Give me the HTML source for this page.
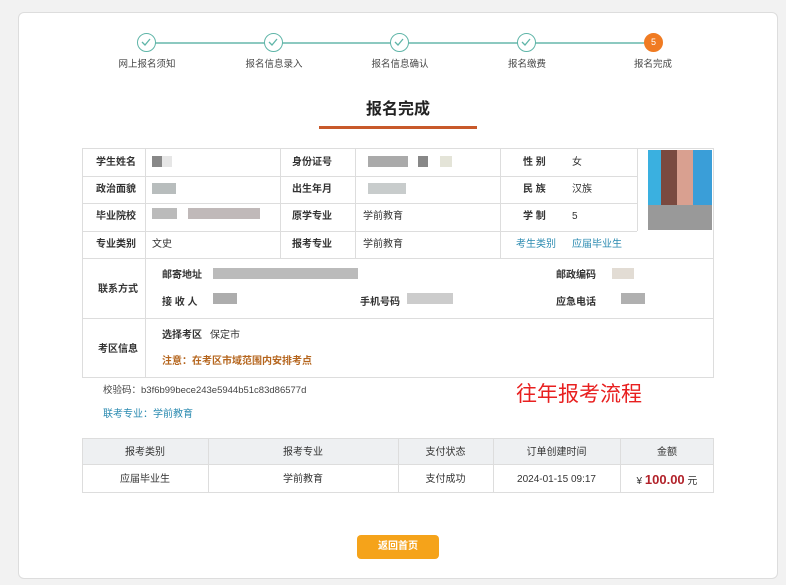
<!DOCTYPE html>
<html><head><meta charset="utf-8"><style>
*{margin:0;padding:0;box-sizing:border-box}
body{width:786px;height:585px;background:#f2f2f2;font-family:"Liberation Sans","Noto Sans CJK SC",sans-serif;font-size:10px;line-height:14px;color:#333;position:relative;overflow:hidden}
.card{position:absolute;left:18px;top:12px;width:760px;height:567px;background:#fff;border:1px solid #ddd;border-radius:6px}
.a{position:absolute}
.c{position:absolute;width:19px;height:19px;border-radius:50%;border:1.5px solid #5fb5a8;background:#fff;top:33px}
.c svg{position:absolute;left:3px;top:4px}
.lbl{position:absolute;top:58px;font-size:9.5px;color:#444;transform:translateX(-50%);white-space:nowrap}
.b{font-weight:bold;color:#333}
.px{position:absolute;height:11px}
.line{position:absolute;background:#ddd}
</style></head><body>
<div class="card"></div>
<div class="a" style="left:147px;top:42px;width:506px;height:1.5px;background:#8cc9c0"></div>
<div class="c" style="left:137px"><svg width="10" height="8"><path d="M1 4l3 3 5-6" stroke="#5fb5a8" stroke-width="1.3" fill="none"/></svg></div>
<div class="c" style="left:264px"><svg width="10" height="8"><path d="M1 4l3 3 5-6" stroke="#5fb5a8" stroke-width="1.3" fill="none"/></svg></div>
<div class="c" style="left:390px"><svg width="10" height="8"><path d="M1 4l3 3 5-6" stroke="#5fb5a8" stroke-width="1.3" fill="none"/></svg></div>
<div class="c" style="left:517px"><svg width="10" height="8"><path d="M1 4l3 3 5-6" stroke="#5fb5a8" stroke-width="1.3" fill="none"/></svg></div>
<div class="c" style="left:644px;background:#f07b22;border-color:#f07b22;color:#fff;font-size:9px;text-align:center;line-height:16px">5</div>
<div class="lbl" style="left:147px">网上报名须知</div>
<div class="lbl" style="left:274px">报名信息录入</div>
<div class="lbl" style="left:400px">报名信息确认</div>
<div class="lbl" style="left:527px">报名缴费</div>
<div class="lbl" style="left:653px">报名完成</div>
<div class="a" style="left:366px;top:100px;font-size:16px;line-height:20px;font-weight:bold;color:#222">报名完成</div>
<div class="a" style="left:319px;top:126px;width:158px;height:3px;background:#c8592a"></div>

<div class="a" style="left:82px;top:148px;width:632px;height:230px;border:1px solid #ddd"></div>
<div class="line" style="left:82px;top:176px;width:555px;height:1px"></div>
<div class="line" style="left:82px;top:203px;width:555px;height:1px"></div>
<div class="line" style="left:82px;top:231px;width:555px;height:1px"></div>
<div class="line" style="left:82px;top:258px;width:632px;height:1px"></div>
<div class="line" style="left:82px;top:318px;width:632px;height:1px"></div>
<div class="line" style="left:145px;top:148px;width:1px;height:230px"></div>
<div class="line" style="left:280px;top:148px;width:1px;height:110px"></div>
<div class="line" style="left:355px;top:148px;width:1px;height:110px"></div>
<div class="line" style="left:500px;top:148px;width:1px;height:110px"></div>
<div class="line" style="left:637px;top:148px;width:1px;height:83px"></div>
<div class="a b" style="left:96px;top:156px">学生姓名</div>
<div class="a b" style="left:96px;top:183px">政治面貌</div>
<div class="a b" style="left:96px;top:210px">毕业院校</div>
<div class="a b" style="left:96px;top:238px">专业类别</div>
<div class="a" style="left:152px;top:238px">文史</div>
<div class="a b" style="left:292px;top:156px">身份证号</div>
<div class="a b" style="left:292px;top:183px">出生年月</div>
<div class="a b" style="left:292px;top:210px">原学专业</div>
<div class="a b" style="left:292px;top:238px">报考专业</div>
<div class="a" style="left:363px;top:210px">学前教育</div>
<div class="a" style="left:363px;top:238px">学前教育</div>
<div class="a b" style="left:523px;top:156px">性 别</div>
<div class="a b" style="left:523px;top:183px">民 族</div>
<div class="a b" style="left:523px;top:210px">学 制</div>
<div class="a" style="left:516px;top:238px;color:#2a8ab0">考生类别</div>
<div class="a" style="left:572px;top:156px">女</div>
<div class="a" style="left:572px;top:183px">汉族</div>
<div class="a" style="left:572px;top:210px">5</div>
<div class="a" style="left:572px;top:238px;color:#2a8ab0">应届毕业生</div>
<div class="px" style="left:152px;top:156px;width:10px;background:#888"></div><div class="px" style="left:162px;top:156px;width:10px;background:#e6e6e6"></div>
<div class="px" style="left:368px;top:156px;width:40px;background:#aaa"></div><div class="px" style="left:418px;top:156px;width:10px;background:#888"></div><div class="px" style="left:440px;top:156px;width:12px;background:#e4e4d8"></div>
<div class="px" style="left:152px;top:183px;width:24px;background:#b8bdbd"></div>
<div class="px" style="left:368px;top:183px;width:38px;background:#c8cccc"></div>
<div class="px" style="left:152px;top:208px;width:25px;background:#bbb"></div><div class="px" style="left:188px;top:208px;width:72px;background:#b0a8a8;opacity:.8"></div>
<div class="a" style="left:648px;top:150px;width:64px;height:80px;background:linear-gradient(90deg,#3ab0e0 0 20%,#7a4a40 20% 45%,#d9a090 45% 70%,#3a9ed8 70%)"></div>
<div class="a" style="left:648px;top:205px;width:64px;height:25px;background:#999"></div>
<div class="a b" style="left:98px;top:283px">联系方式</div>
<div class="a b" style="left:162px;top:269px">邮寄地址</div>
<div class="a b" style="left:162px;top:296px">接 收 人</div>
<div class="a b" style="left:360px;top:296px">手机号码</div>
<div class="a b" style="left:556px;top:269px">邮政编码</div>
<div class="a b" style="left:556px;top:296px">应急电话</div>
<div class="px" style="left:213px;top:268px;width:145px;background:#aaa;opacity:.8"></div>
<div class="px" style="left:213px;top:293px;width:24px;background:#999;opacity:.8"></div>
<div class="px" style="left:407px;top:293px;width:46px;background:#ccc"></div>
<div class="px" style="left:612px;top:268px;width:22px;background:#e2dcd4"></div>
<div class="px" style="left:621px;top:293px;width:24px;background:#b0b0b0"></div>
<div class="a b" style="left:98px;top:343px">考区信息</div>
<div class="a b" style="left:162px;top:329px">选择考区</div>
<div class="a" style="left:210px;top:329px">保定市</div>
<div class="a b" style="left:162px;top:355px;color:#b5651d">注意：在考区市域范围内安排考点</div>
<div class="a" style="left:103px;top:384px;font-size:9.5px;color:#444">校验码：b3f6b99bece243e5944b51c83d86577d</div>
<div class="a" style="left:103px;top:408px;color:#2a8ab0">联考专业：学前教育</div>
<div class="a" style="left:516px;top:382px;font-size:21px;line-height:26px;color:#e82020">往年报考流程</div>
<div class="a" style="left:82px;top:438px;width:632px;height:55px;border:1px solid #ddd"></div>
<div class="a" style="left:83px;top:439px;width:630px;height:26px;background:#eef0f2;border-bottom:1px solid #ddd"></div>
<div class="line" style="left:208px;top:438px;width:1px;height:55px"></div>
<div class="line" style="left:398px;top:438px;width:1px;height:55px"></div>
<div class="line" style="left:493px;top:438px;width:1px;height:55px"></div>
<div class="line" style="left:620px;top:438px;width:1px;height:55px"></div>
<div class="a" style="left:82px;top:446px;width:126px;text-align:center">报考类别</div>
<div class="a" style="left:208px;top:446px;width:190px;text-align:center">报考专业</div>
<div class="a" style="left:398px;top:446px;width:95px;text-align:center">支付状态</div>
<div class="a" style="left:493px;top:446px;width:127px;text-align:center">订单创建时间</div>
<div class="a" style="left:620px;top:446px;width:94px;text-align:center">金额</div>
<div class="a" style="left:82px;top:473px;width:126px;text-align:center">应届毕业生</div>
<div class="a" style="left:208px;top:473px;width:190px;text-align:center">学前教育</div>
<div class="a" style="left:398px;top:473px;width:95px;text-align:center">支付成功</div>
<div class="a" style="left:493px;top:473px;width:127px;text-align:center">2024-01-15 09:17</div>
<div class="a" style="left:620px;top:472px;width:94px;text-align:center;line-height:16px">¥ <b style="color:#b2222a;font-size:13px">100.00</b> 元</div>
<div class="a" style="left:357px;top:535px;width:82px;height:24px;background:#f5a31a;border-radius:4px;color:#fff;font-weight:bold;text-align:center;line-height:24px">返回首页</div>
</body></html>
